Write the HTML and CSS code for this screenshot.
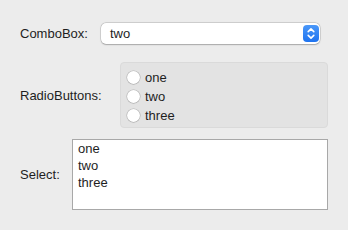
FILE: index.html
```html
<!DOCTYPE html>
<html>
<head>
<meta charset="utf-8">
<link rel="stylesheet" href="styles.css">
</head>
<body>
<div class="form">
  <div class="row row-combo">
    <span class="label">ComboBox:</span>
    <div class="combo">
      <span class="combo-text">two</span>
      <span class="stepper">
        <svg width="16" height="17" viewBox="0 0 16 17">
          <path d="M5.2 6.6 L8 3.9 L10.8 6.6" fill="none" stroke="#fff" stroke-width="1.6" stroke-linecap="round" stroke-linejoin="round"/>
          <path d="M5.2 10.4 L8 13.1 L10.8 10.4" fill="none" stroke="#fff" stroke-width="1.6" stroke-linecap="round" stroke-linejoin="round"/>
        </svg>
      </span>
    </div>
  </div>
  <div class="row row-radio">
    <span class="label">RadioButtons:</span>
    <div class="group">
      <div class="radio"><span class="circle"></span><span>one</span></div>
      <div class="radio"><span class="circle"></span><span>two</span></div>
      <div class="radio"><span class="circle"></span><span>three</span></div>
    </div>
  </div>
  <div class="row row-select">
    <span class="label">Select:</span>
    <div class="list">
      <div class="item">one</div>
      <div class="item">two</div>
      <div class="item">three</div>
    </div>
  </div>
</div>
</body>
</html>
```
FILE: styles.css
```css
html, body {
  margin: 0;
  padding: 0;
  background: #ececec;
}
body {
  font-family: "Liberation Sans", Arial, sans-serif;
  font-size: 13px;
  color: #1e1e1e;
  width: 348px;
  height: 230px;
  overflow: hidden;
}
.form {
  padding: 23px 0 0 20px;
  display: flex;
  flex-direction: column;
}
.row {
  display: flex;
  align-items: center;
}
.label {
  white-space: nowrap;
}
.row-combo .label { width: 81px; }
.row-radio { margin-top: 18px; }
.row-radio .label { width: 100px; }
.row-select { margin-top: 11px; }
.row-select .label { width: 52px; }

.combo {
  width: 219px;
  height: 21px;
  box-sizing: border-box;
  background: #fff;
  border-radius: 5px;
  box-shadow: 0 0 0 0.5px rgba(0,0,0,0.18), 0 0.5px 1.5px rgba(0,0,0,0.22);
  display: flex;
  align-items: center;
  justify-content: space-between;
  padding: 0 1px 0 9px;
}
.combo-text {
  line-height: 21px;
}
.stepper {
  width: 16px;
  height: 17px;
  border-radius: 4px;
  background: linear-gradient(#4a98f9, #1f73ef);
  display: flex;
}
.group {
  width: 208px;
  height: 66px;
  box-sizing: border-box;
  background: #e3e3e3;
  border: 1px solid #dadada;
  border-radius: 4px;
  padding: 5px 0 0 6px;
  display: flex;
  flex-direction: column;
}
.radio {
  height: 19px;
  display: flex;
  align-items: center;
}
.circle {
  width: 13px;
  height: 13px;
  box-sizing: border-box;
  border-radius: 50%;
  background: #fff;
  box-shadow: 0 0 0 0.5px rgba(0,0,0,0.2), 0 0.5px 1px rgba(0,0,0,0.15);
  margin-right: 5px;
}
.list {
  width: 256px;
  height: 71px;
  box-sizing: border-box;
  background: #fff;
  border: 1px solid #a8a8a8;
  padding: 0 0 0 5px;
}
.item {
  line-height: 17px;
}
```
